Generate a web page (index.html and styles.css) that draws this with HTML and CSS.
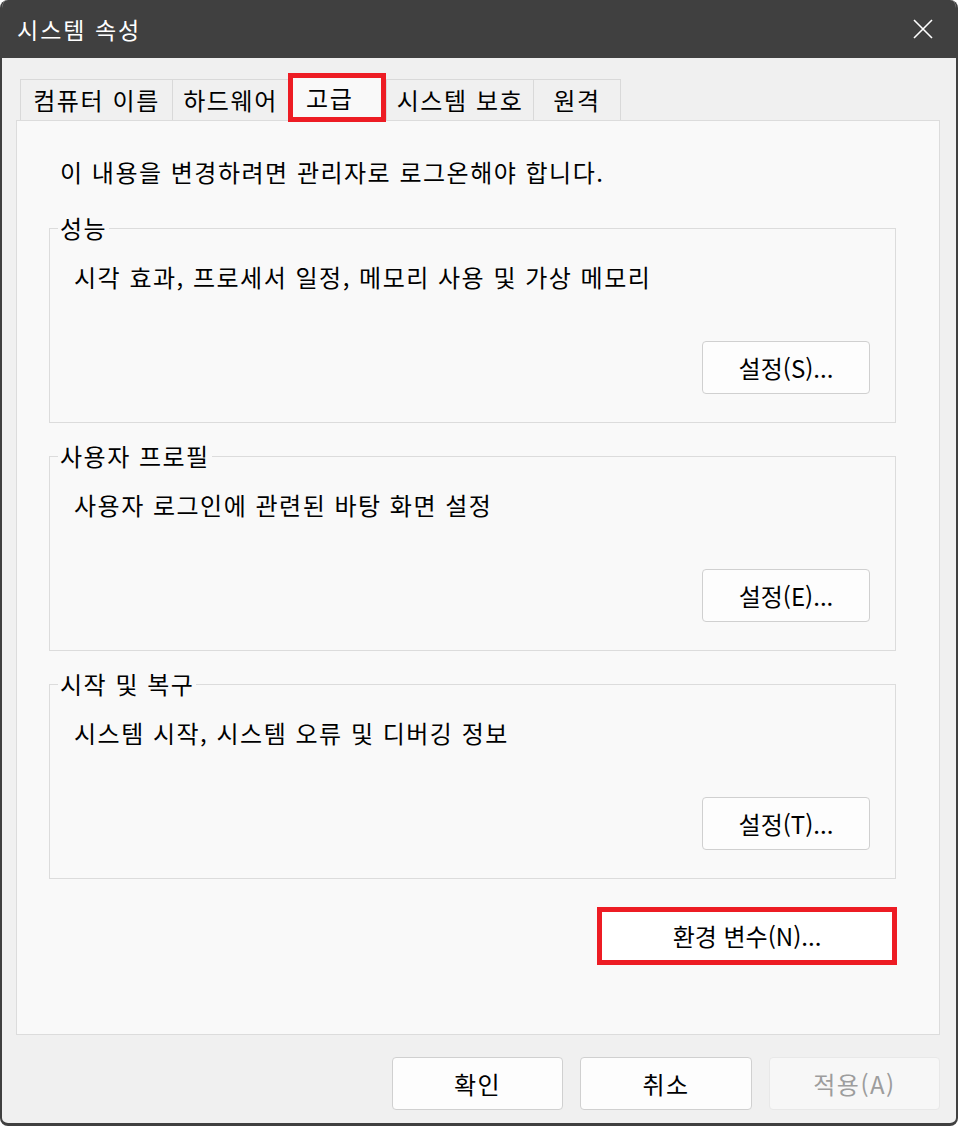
FILE: index.html
```html
<!DOCTYPE html>
<html lang="ko">
<head>
<meta charset="utf-8">
<title>시스템 속성</title>
<link rel="stylesheet" href="styles.css">
</head>
<body>
<div class="window">
  <div class="titlebar">
    <span class="title">시스템 속성</span>
    <svg class="close" width="20" height="20" viewBox="0 0 20 20"><path d="M1 1 L19 19 M19 1 L1 19" stroke="#ffffff" stroke-width="1.6" fill="none"/></svg>
  </div>
  <div class="client">
    <div class="tabs">
      <div class="tab t1">컴퓨터 이름</div>
      <div class="tab t2">하드웨어</div>
      <div class="tab active">고급</div>
      <div class="tab t4">시스템 보호</div>
      <div class="tab t5">원격</div>
    </div>
    <div class="panel">
      <p class="notice">이 내용을 변경하려면 관리자로 로그온해야 합니다.</p>
      <fieldset class="group first">
        <legend>성능</legend>
        <p class="desc">시각 효과, 프로세서 일정, 메모리 사용 및 가상 메모리</p>
        <div class="btn-row"><button class="btn set">설정(S)...</button></div>
      </fieldset>
      <fieldset class="group">
        <legend>사용자 프로필</legend>
        <p class="desc">사용자 로그인에 관련된 바탕 화면 설정</p>
        <div class="btn-row"><button class="btn set">설정(E)...</button></div>
      </fieldset>
      <fieldset class="group">
        <legend>시작 및 복구</legend>
        <p class="desc">시스템 시작, 시스템 오류 및 디버깅 정보</p>
        <div class="btn-row"><button class="btn set">설정(T)...</button></div>
      </fieldset>
      <div class="env-row"><button class="btn env">환경 변수(N)...</button></div>
    </div>
    <div class="footer">
      <button class="btn foot">확인</button>
      <button class="btn foot cancel">취소</button>
      <button class="btn foot disabled">적용(A)</button>
    </div>
  </div>
</div>
</body>
</html>
```
FILE: styles.css
```css
html, body {
  margin: 0;
  padding: 0;
  background: #ffffff;
}
body {
  font-family: "Noto Sans CJK KR", "Noto Sans", sans-serif;
  color: #000000;
}
.window {
  width: 958px;
  height: 1126px;
  box-sizing: border-box;
  border: 2px solid #404040;
  border-top: 0;
  border-bottom-width: 3px;
  border-radius: 8px;
  background: #f0f0f0;
  overflow: hidden;
  display: flex;
  flex-direction: column;
}
.titlebar {
  height: 58px;
  flex: none;
  background: #404040;
  display: flex;
  align-items: center;
  justify-content: space-between;
  padding: 0 23px 0 15px;
}
.title {
  color: #ffffff;
  font-size: 23px;
  line-height: 30px;
  letter-spacing: 2px;
}
.close {
  display: block;
}
.client {
  flex: 1;
  display: flex;
  flex-direction: column;
  padding: 21px 16px 0 14px;
}
.tabs {
  display: flex;
  align-items: flex-end;
  height: 41px;
  margin-left: 4px;
}
.tab {
  box-sizing: border-box;
  height: 41px;
  border-top: 1px solid #d9d9d9;
  border-left: 1px solid #d9d9d9;
  display: flex;
  align-items: center;
  justify-content: center;
  font-size: 24px;
  line-height: 32px;
  letter-spacing: 1.6px;
  background: #f0f0f0;
}
.t1 { width: 152px; }
.t2 { width: 116px; }
.t4 { width: 147px; }
.t5 { width: 88px; border-right: 1px solid #d9d9d9; }
.tab.active {
  width: 98px;
  height: 49px;
  margin-bottom: -2px;
  position: relative;
  z-index: 1;
  border: 5px solid #ed1c24;
  background: #f9f9f9;
  justify-content: flex-start;
  padding-left: 13px;
}
.panel {
  box-sizing: border-box;
  height: 915px;
  flex: none;
  border: 1px solid #dcdcdc;
  background: #f9f9f9;
  padding: 0 43px 0 32px;
}
.notice {
  margin: 35px 0 0 11px;
  font-size: 24px;
  line-height: 32px;
  letter-spacing: 1.5px;
}
.group {
  margin: 21px 0 0 0;
  border: 1px solid #dcdcdc;
  padding: 0 0 28px 8px;
  min-width: 0;
}
.group.first {
  margin-top: 28px;
}
.group legend {
  padding: 0 2px 0 2px;
  font-size: 24px;
  line-height: 24px;
  letter-spacing: 1.5px;
}
.desc {
  margin: 21px 0 0 16px;
  font-size: 24px;
  line-height: 32px;
  letter-spacing: 1.5px;
}
.btn-row {
  display: flex;
  justify-content: flex-end;
  margin-top: 48px;
  padding-right: 25px;
}
.btn {
  box-sizing: border-box;
  font-family: "Noto Sans CJK KR", "Noto Sans", sans-serif;
  font-size: 24px;
  line-height: 32px;
  color: #000000;
  background: #fdfdfd;
  border: 1px solid #d0d0d0;
  border-radius: 4px;
  padding: 0;
  display: flex;
  align-items: center;
  justify-content: center;
}
.btn.set {
  width: 168px;
  height: 53px;
}
.env-row {
  display: flex;
  justify-content: flex-end;
  margin: 28px -1px 0 0;
}
.btn.env {
  width: 300px;
  height: 58px;
  border: 5px solid #ed1c24;
  border-radius: 0;
  background: #ffffff;
}
.footer {
  display: flex;
  justify-content: flex-end;
  gap: 17px;
  padding-top: 22px;
}
.btn.foot {
  width: 171px;
  height: 53px;
  letter-spacing: 1.5px;
}
.btn.foot.cancel {
  width: 172px;
}
.btn.disabled {
  color: #9d9d9d;
  background: #f7f7f7;
  border-color: #e8e8e8;
}
```
